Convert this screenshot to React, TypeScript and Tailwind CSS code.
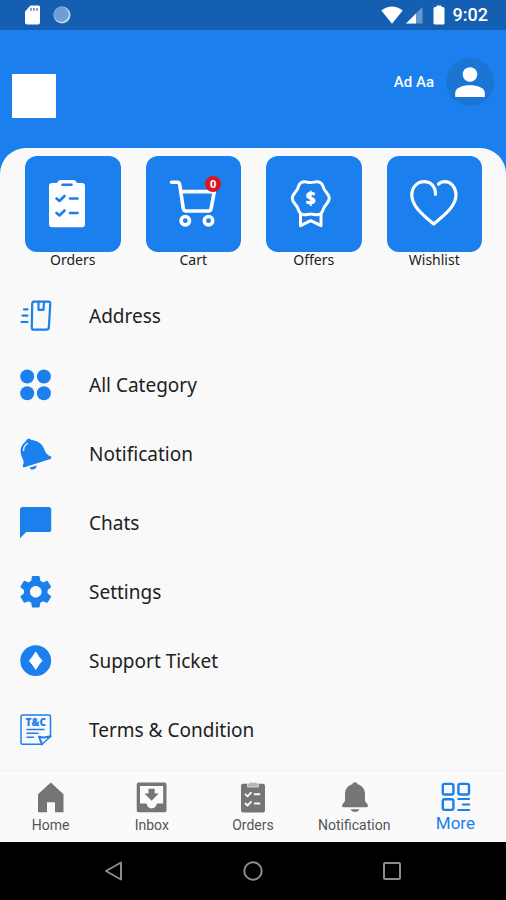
import { useState } from 'react';
import type { ReactNode } from 'react';

const BLUE = '#1b7fed';

function StatusBar() {
  return (
    <div className="flex h-[30px] items-center justify-between bg-[#145fb1] pl-6 pr-[18px] text-white">
      <div className="flex items-center gap-3">
        <svg width="17" height="20" viewBox="0 0 17 20">
          <path d="M6.5 0.5H14.5Q16 0.5 16 2V17.5Q16 19.5 14 19.5H3Q1 19.5 1 17.5V6.500Z" fill="#fff" />
          <path d="M7 3V6M10 3V6M13 3V6" stroke="#6d86c0" strokeWidth="1.5" />
        </svg>
        <svg width="18" height="18" viewBox="0 0 18 18">
          <circle cx="9" cy="9" r="8.500" fill="#fff" fillOpacity="0.75" />
          <circle cx="8.300" cy="8.300" r="7.500" fill="#6d9fd6" />
        </svg>
      </div>
      <div className="flex items-center">
        <svg width="22" height="18" viewBox="0 0 22 18">
          <path d="M0.300 4.500Q11 -3.600 21.700 4.500L11 17.700Z" fill="#fff" />
        </svg>
        <svg className="ml-0.5" width="18" height="18" viewBox="0 0 18 18">
          <path d="M17.500 1V17.500H1Z" fill="#fff" fillOpacity="0.35" />
          <path d="M11 7.500V17.500H1Z" fill="#fff" />
        </svg>
        <svg className="ml-2.5" width="12" height="20" viewBox="0 0 12 20">
          <path d="M3.500 0.500H8.500V2H10Q11.500 2 11.500 3.500V18Q11.500 19.500 10 19.500H2Q0.500 19.500 0.500 18V3.500Q0.500 2 2 2H3.500Z" fill="#fff" />
        </svg>
        <span className="ml-2 font-['Roboto',sans-serif] text-lg font-medium">9:02</span>
      </div>
    </div>
  );
}

function ClipboardIcon() {
  return (
    <svg width="48" height="48" viewBox="0 0 48 48">
      <path d="M3 3H8Q9 0 12 0H24Q27 0 28 3H33Q36 3 36 6V44Q36 47.300 33 47.300H3Q0 47.300 0 44V6Q0 3 3 3Z" fill="#fff" />
      <g fill="none" stroke={BLUE} strokeWidth="2.600" strokeLinecap="round" strokeLinejoin="round">
        <path d="M13.500 4.700H22.500M21 18.500H28.500M21 33H28.500" />
        <path d="M7.500 18.500L10.500 21L15.500 16M7.500 33L10.500 35.500L15.500 30.500" />
      </g>
    </svg>
  );
}

function CartIcon() {
  return (
    <svg width="48" height="48" viewBox="0 0 48 48" fill="none" stroke="#fff" strokeWidth="3.600" strokeLinecap="round" strokeLinejoin="round">
      <path d="M2.500 2.200H8.500Q10.300 2.200 10.700 4.500L14.300 28.500Q14.700 31 17 31H39.500Q41.700 31 42.100 28.500L45.300 11.600H12" />
      <circle cx="16.300" cy="40.700" r="4.200" />
      <circle cx="39.500" cy="40.700" r="4.200" />
    </svg>
  );
}

function OffersIcon() {
  return (
    <svg width="48" height="48" viewBox="0 0 48 48">
      <g fill="none" stroke="#fff" strokeWidth="3" strokeLinejoin="round" strokeLinecap="round">
        <path d="M20.700 2.600C23.500 2.600 25 1.600 27.500 1.800C32.500 2.200 32.500 5.500 33.800 8.500C35.200 12 39.300 14 39.300 18.300C39.300 22.500 35.200 24.500 33.800 28C32.500 31 32.500 34.400 27.500 34.800C25 35 23.500 34 20.700 34C18 34 16.500 35 14 34.800C9 34.400 9 31 7.700 28C6.300 24.500 2.200 22.500 2.200 18.300C2.200 14 6.300 12 7.700 8.500C9 5.500 9 2.200 14 1.800C16.500 1.600 18 2.600 20.700 2.600Z" />
        <path d="M10.500 34V45.700L20.700 40.700L31 45.700V34" />
      </g>
      <text x="20.700" y="24.500" textAnchor="middle" fill="#fff" stroke="#fff" strokeWidth="0.600" className="font-['Noto_Sans',sans-serif] text-[17px] font-bold">$</text>
    </svg>
  );
}

function HeartIcon() {
  return (
    <svg width="48" height="48" viewBox="0 0 48 48" fill="none" stroke="#fff" strokeWidth="3.200" strokeLinecap="round" strokeLinejoin="round">
      <path d="M25.500 14.300C25.500 6.500 21 1.700 14.300 1.700C7 1.700 1.800 7.500 1.800 14.800C1.800 25 10 33 23.700 44C37.500 33 46 25 46 14.800C46 7.500 41 1.700 34.500 1.700C32 1.700 30 2.500 28.500 4" />
    </svg>
  );
}

function AddressIcon() {
  return (
    <svg width="32" height="32" viewBox="0 0 32 32" fill="none" stroke={BLUE} strokeWidth="2.200" strokeLinecap="round" strokeLinejoin="round">
      <path d="M14 1.700H28.500Q30.500 1.700 30.300 3.700L28.800 27.700Q28.600 29.700 26.500 29.700H13.500Q11.700 29.700 11.800 27.700L12.200 3.700Q12.300 1.700 14 1.700Z" />
      <path d="M18.500 2V9.800H23.500L24 2" />
      <path d="M4 9.300H7.500M2.500 15.600H7.500M1.500 22H7.500" />
    </svg>
  );
}

function CategoryIcon() {
  return (
    <svg width="32" height="32" viewBox="0 0 32 32" fill={BLUE}>
      <circle cx="7.200" cy="7.500" r="7" />
      <circle cx="23.900" cy="7.500" r="7" />
      <circle cx="7.200" cy="24.300" r="7" />
      <circle cx="23.900" cy="24.300" r="7" />
    </svg>
  );
}

function TiltedBellIcon() {
  return (
    <svg width="32" height="32" viewBox="0 0 32 32">
      <path d="M6 3.200C6 0.500 10.500 -0.200 11 2C18 2.500 22.500 6 24.500 12C26 16 28 17.500 30.500 18.300C31.700 18.800 31.500 20.500 30.500 20.900L4.500 29.300C3 29.800 2.300 28.300 3 27C4.500 23.500 3 21.500 1.500 18C-0.500 12 1 6.500 6 3.200Z" fill={BLUE} />
      <path d="M9.500 29.700L16.500 27.500C17 31 11.500 33.300 9.500 29.700Z" fill={BLUE} />
      <path d="M3.700 12.500C3.400 9.500 4.700 7 7.500 5.500" fill="none" stroke="#f9f9f9" strokeWidth="1.300" strokeLinecap="round" />
    </svg>
  );
}

function ChatIcon() {
  return (
    <svg width="32" height="32" viewBox="2 2 20.500 20.500" fill={BLUE}>
      <path d="M20.500 2H3.500c-.8 0-1.500.7-1.500 1.500V22l4-4h14.500c.8 0 1.500-.7 1.500-1.500V3.500c0-.8-.7-1.500-1.500-1.500z" />
    </svg>
  );
}

function SettingsIcon() {
  return (
    <svg width="32" height="32" viewBox="2 2 20.300 20.300" fill={BLUE}>
      <path d="M19.430 12.980c.04-.32.07-.64.07-.98s-.03-.66-.07-.98l2.110-1.650c.19-.15.24-.42.12-.64l-2-3.460c-.12-.22-.39-.3-.61-.22l-2.490 1c-.52-.4-1.080-.73-1.690-.98l-.38-2.650C14.460 2.180 14.250 2 14 2h-4c-.25 0-.46.18-.49.42l-.38 2.650c-.61.25-1.170.59-1.690.98l-2.490-1c-.23-.09-.49 0-.61.22l-2 3.460c-.13.22-.07.49.12.64l2.110 1.650c-.04.32-.07.65-.07.98s.03.66.07.98l-2.110 1.650c-.19.15-.24.42-.12.64l2 3.460c.12.22.39.3.61.22l2.490-1c.52.4 1.080.73 1.690.98l.38 2.650c.03.24.24.42.49.42h4c.25 0 .46-.18.49-.42l.38-2.650c.61-.25 1.170-.59 1.690-.98l2.490 1c.23.09.49 0 .61-.22l2-3.460c.12-.22.07-.49-.12-.64l-2.110-1.650zM12 15.700c-2 0-3.700-1.700-3.700-3.700s1.700-3.700 3.700-3.700 3.700 1.700 3.700 3.700-1.700 3.700-3.700 3.700z" />
    </svg>
  );
}

function TicketIcon() {
  return (
    <svg width="32" height="32" viewBox="0 0 32 32">
      <circle cx="15.700" cy="15.700" r="15.400" fill={BLUE} />
      <path d="M15.700 7Q18.500 12 22 15.700Q18.500 19.500 15.700 24.400Q12.900 19.500 9.400 15.700Q12.900 12 15.700 7Z" fill="#fff" stroke="#fff" strokeLinejoin="round" />
    </svg>
  );
}

function TermsIcon() {
  return (
    <svg width="32" height="32" viewBox="0 0 32 32" fill="none" stroke={BLUE} strokeWidth="1.500" strokeLinejoin="round" strokeLinecap="round">
      <path d="M2.500 1H29Q30.500 1 30.500 2.500V22.500L22 30.300H2.500Q1 30.300 1 28.800V2.500Q1 1 2.500 1Z" />
      <path d="M22 30.300L19 22.600Q24 24.300 30.500 22.300" strokeWidth="2" />
      <path d="M7 15.500H24M7 19.300H18M7 23.200H13.500" />
      <text x="15.800" y="12" textAnchor="middle" fill={BLUE} stroke="none" className="font-['Open_Sans',sans-serif] text-[10px] font-extrabold">T&amp;C</text>
    </svg>
  );
}

function HomeIcon() {
  return (
    <svg width="31" height="31" viewBox="0 0 31 31" fill="#757575">
      <path d="M15.800 0.500L28.500 12.300V30.300H20V20.300H12V30.300H3V12.300Z" />
    </svg>
  );
}

function InboxIcon() {
  return (
    <svg width="31" height="31" viewBox="0 0 31 31">
      <path fillRule="evenodd" d="M2.500 0.500H28.500Q30.500 0.500 30.500 2.500V28.500Q30.500 30.300 28.500 30.300H2.500Q0.700 30.300 0.700 28.500V2.500Q0.700 0.500 2.500 0.500ZM4 4V21.500H10.500C11.500 28 19.800 28 20.800 21.500H27.200V4Z" fill="#757575" />
      <path d="M12.500 6.800H18.700V11.500H22.700L15.600 18.800L8.500 11.500H12.500Z" fill="#757575" />
    </svg>
  );
}

function OrdersNavIcon() {
  return (
    <svg width="31" height="31" viewBox="0 0 31 31">
      <path d="M6 1.700H26Q28 1.700 28 3.700V28.500Q28 30.500 26 30.500H6Q4 30.500 4 28.500V3.700Q4 1.700 6 1.700Z" fill="#757575" />
      <path d="M10.500 5V2.500Q10.500 2 11.500 2Q12 0.500 13.500 0.500H18.500Q20 0.500 20.500 2Q21.500 2 21.500 2.500V5Z" fill="#b5b5b5" stroke="#e8e8e8" strokeWidth="0.800" />
      <g fill="none" stroke="#fafafa" strokeWidth="1.900" strokeLinecap="round" strokeLinejoin="round">
        <path d="M17.700 12.300H22.500M17.700 21.500H22.500" />
        <path d="M8.500 12.300L10.500 14.300L14 10.700M8.500 21.500L10.500 23.500L14 19.900" />
      </g>
    </svg>
  );
}

function BellNavIcon() {
  return (
    <svg width="31" height="31" viewBox="0 0 31 31" fill="#757575">
      <path d="M13.500 2.200C13.500 -0.500 18.500 -0.500 18.500 2.200C23.500 3.500 26 7.500 26 12V19L28.600 22.500Q29.500 25.300 27.500 25.300H4.500Q2.500 25.300 3.400 22.500L6 19V12C6 7.500 8.500 3.500 13.500 2.200Z" />
      <path d="M11.500 27.300H20.500C19.500 30.700 12.500 30.700 11.500 27.300Z" />
    </svg>
  );
}

function MoreIcon() {
  return (
    <svg width="31" height="31" viewBox="0 0 31 31" fill="none" stroke={BLUE} strokeWidth="2.400" strokeLinecap="round">
      <rect x="2.800" y="1.900" width="10.600" height="10.600" rx="1.800" />
      <rect x="18.400" y="1.900" width="10.600" height="10.600" rx="1.800" />
      <rect x="2.800" y="17.300" width="10.600" height="10.600" rx="1.800" />
      <path d="M18.200 17H29.100M22.900 22.500H29.100M18.200 28H29.100" strokeWidth="2.200" />
    </svg>
  );
}

type Item = { label: string; icon: ReactNode };

const shortcuts: (Item & { badge?: number })[] = [
  { label: 'Orders', icon: <ClipboardIcon /> },
  { label: 'Cart', icon: <CartIcon />, badge: 0 },
  { label: 'Offers', icon: <OffersIcon /> },
  { label: 'Wishlist', icon: <HeartIcon /> },
];

const menu: Item[] = [
  { label: 'Address', icon: <AddressIcon /> },
  { label: 'All Category', icon: <CategoryIcon /> },
  { label: 'Notification', icon: <TiltedBellIcon /> },
  { label: 'Chats', icon: <ChatIcon /> },
  { label: 'Settings', icon: <SettingsIcon /> },
  { label: 'Support Ticket', icon: <TicketIcon /> },
  { label: 'Terms & Condition', icon: <TermsIcon /> },
];

const tabs: Item[] = [
  { label: 'Home', icon: <HomeIcon /> },
  { label: 'Inbox', icon: <InboxIcon /> },
  { label: 'Orders', icon: <OrdersNavIcon /> },
  { label: 'Notification', icon: <BellNavIcon /> },
  { label: 'More', icon: <MoreIcon /> },
];

export default function App() {
  const [activeTab, setActiveTab] = useState('More');

  return (
    <div className="flex min-h-screen flex-col bg-[#1b7fed] font-['Noto_Sans',sans-serif] text-[#212121]">
      <StatusBar />

      <header className="flex items-start justify-between px-3 pb-[30px] pt-7">
        <div className="mt-4 size-11 bg-white" />
        <div className="flex items-center gap-3 text-white">
          <span className="font-['Roboto',sans-serif] text-[15px] font-medium">Ad Aa</span>
          <div className="flex size-12 items-center justify-center rounded-full bg-[#1a76d2]">
            <svg width="30" height="30" viewBox="0 0 30 30" fill="#fff">
              <circle cx="15" cy="7.500" r="7.300" />
              <path d="M0.200 30V26C0.200 15.700 29.800 15.700 29.800 26V30Z" />
            </svg>
          </div>
        </div>
      </header>

      <main className="flex-1 rounded-t-[26px] bg-[#f9f9f9] pt-2">
        <div className="grid grid-cols-4 gap-[25px] pl-[25px] pr-6">
          {shortcuts.map((item) => (
            <button key={item.label} className="flex flex-col items-center text-sm leading-4">
              <span className="flex aspect-square w-full items-center justify-center rounded-xl bg-[#1b7fed]">
                <span className="relative">
                  {item.icon}
                  {item.badge !== undefined && (
                    <span className="absolute -right-1 -top-1 flex size-4 items-center justify-center rounded-full bg-[#d7191f] text-[11px] font-bold text-white">
                      {item.badge}
                    </span>
                  )}
                </span>
              </span>
              {item.label}
            </button>
          ))}
        </div>

        <ul className="mt-3.5">
          {menu.map((item) => (
            <li key={item.label}>
              <button className="flex h-[69px] w-full items-center gap-[37px] px-5 text-left text-[19px]">
                {item.icon}
                {item.label}
              </button>
            </li>
          ))}
        </ul>
      </main>

      <nav className="grid h-[72px] grid-cols-5 border-t border-[#f2f2f2] bg-[#fafafa] pt-[11px] font-['Roboto',sans-serif]">
        {tabs.map((tab) => (
          <button
            key={tab.label}
            onClick={() => setActiveTab(tab.label)}
            className={`flex flex-col items-center ${
              activeTab === tab.label ? 'text-[17px] leading-5 text-[#1b7fed]' : 'text-sm leading-6 text-[#555555]'
            }`}
          >
            {tab.icon}
            {tab.label}
          </button>
        ))}
      </nav>

      <div className="flex h-[58px] items-center justify-around bg-black px-11">
        <button aria-label="Back">
          <svg width="20" height="20" viewBox="0 0 20 20" fill="none" stroke="#8c8c8c" strokeWidth="2" strokeLinejoin="round">
            <path d="M17 1.500V18.500L2 10Z" />
          </svg>
        </button>
        <button aria-label="Home">
          <svg width="20" height="20" viewBox="0 0 20 20" fill="none" stroke="#8c8c8c" strokeWidth="2">
            <circle cx="10" cy="10" r="8.700" />
          </svg>
        </button>
        <button aria-label="Recents">
          <svg width="20" height="20" viewBox="0 0 20 20" fill="none" stroke="#8c8c8c" strokeWidth="2">
            <rect x="2" y="2" width="16" height="16" rx="1" />
          </svg>
        </button>
      </div>
    </div>
  );
}
